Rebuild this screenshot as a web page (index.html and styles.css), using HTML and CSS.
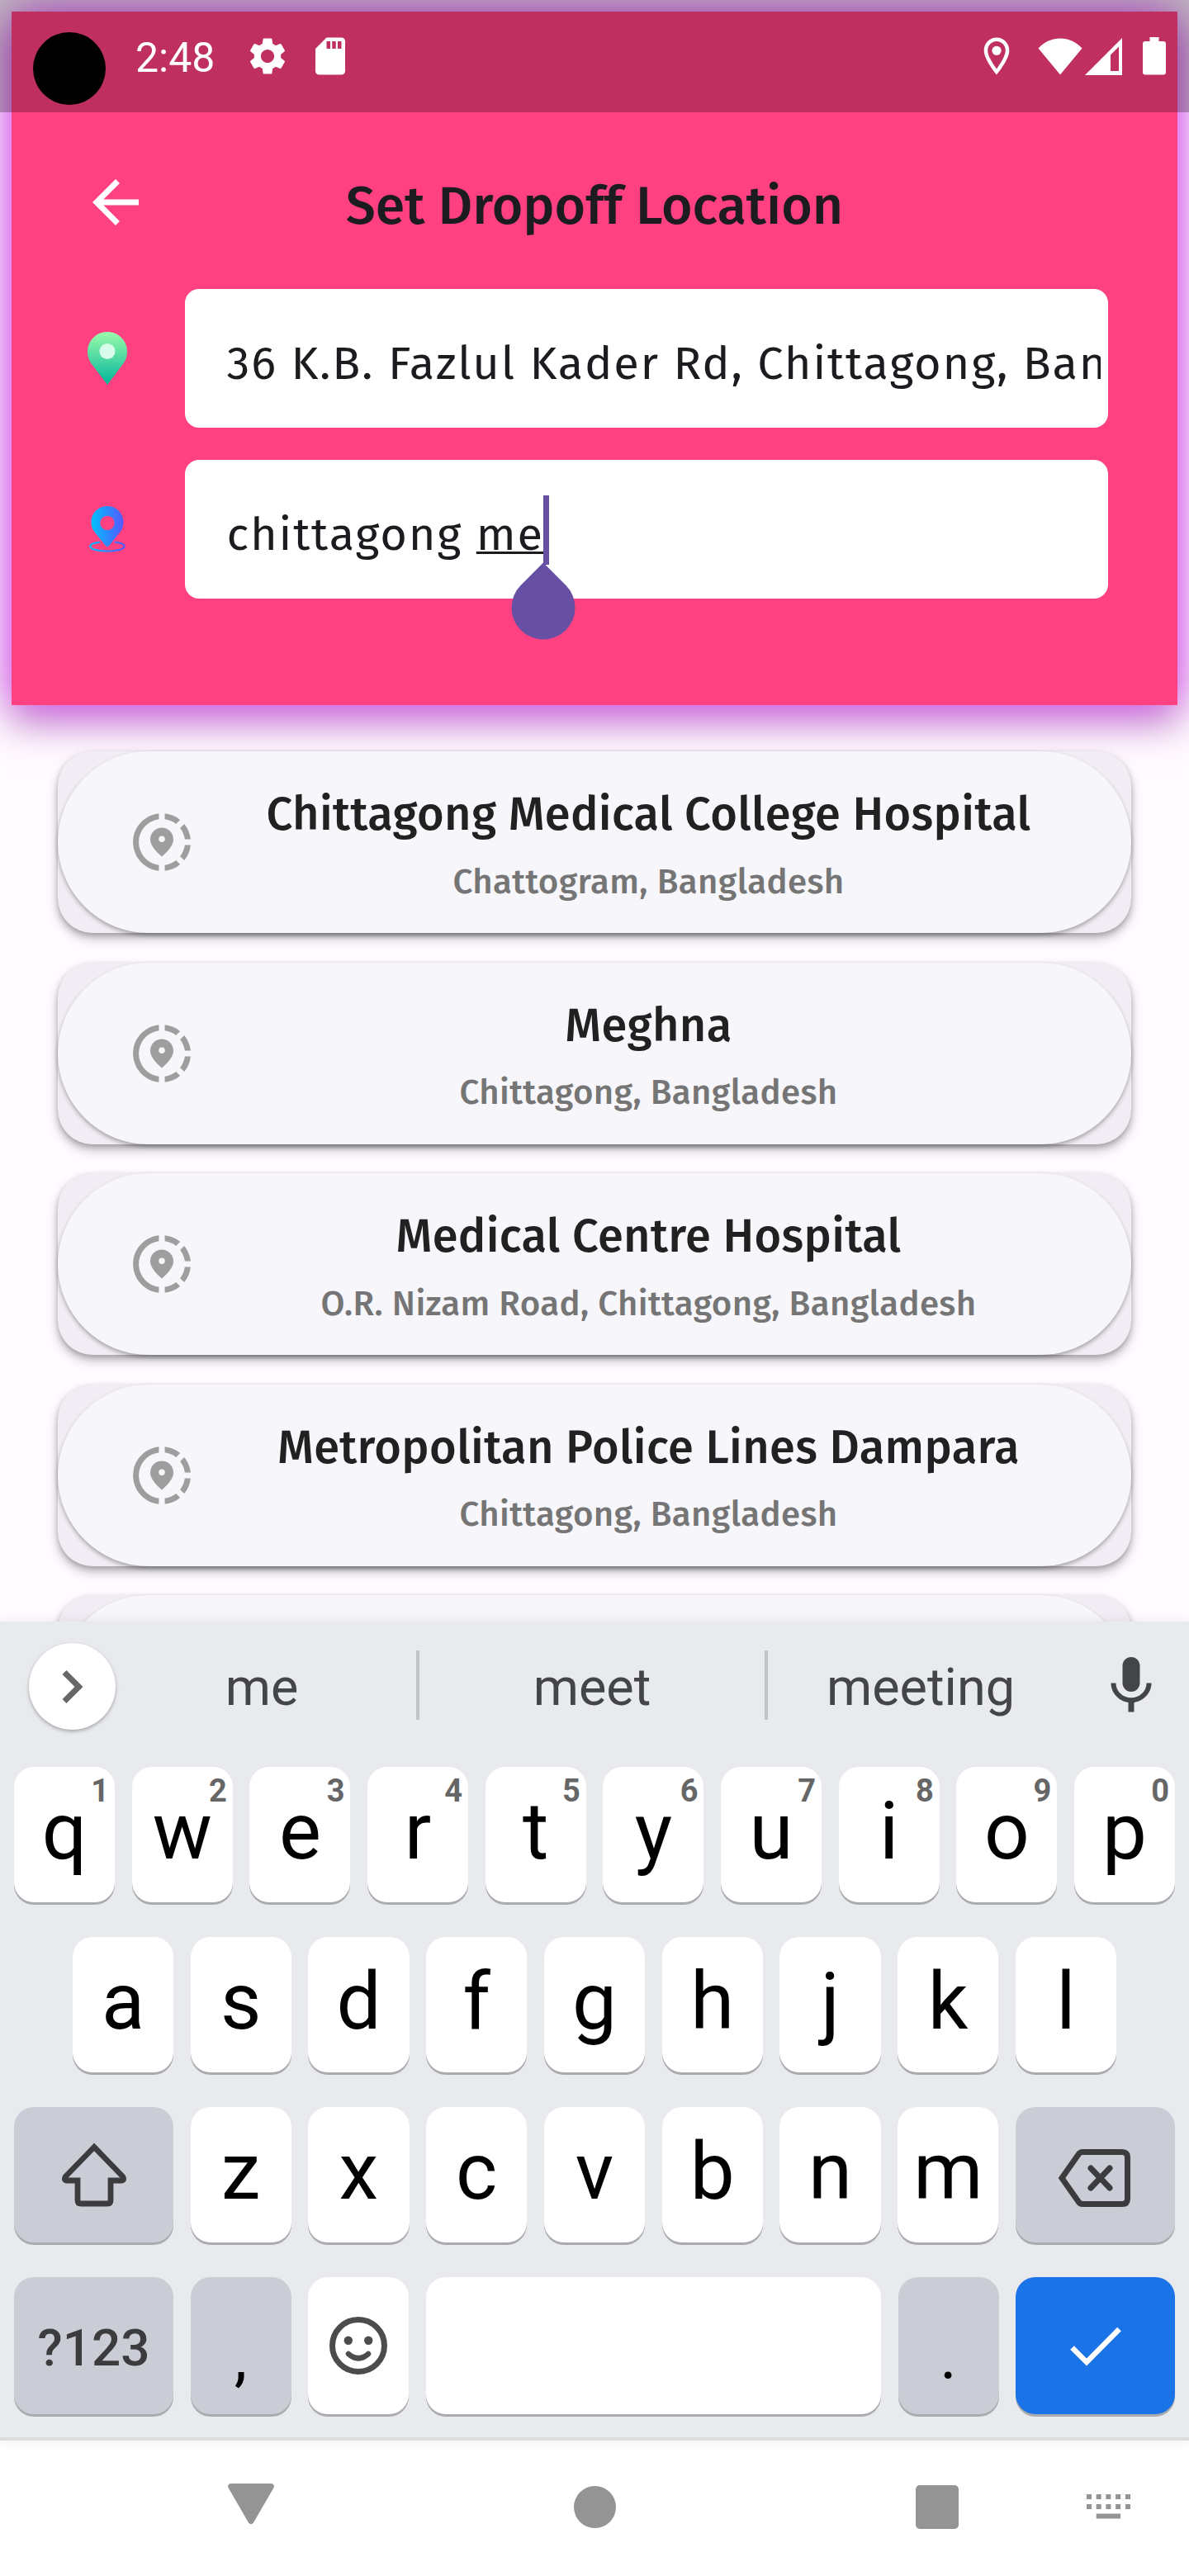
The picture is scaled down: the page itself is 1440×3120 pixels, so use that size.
FILE: index.html
```html
<!DOCTYPE html>
<html lang="en">
<head>
<meta charset="utf-8">
<title>Set Dropoff Location</title>
<link rel="stylesheet" href="styles.css">
</head>
<body>
<div class="phone">
  <div class="status-bar">
    <div class="camera"></div>
    <span class="clock">2:48</span>
    <svg class="ic-gear" width="54" height="54" viewBox="0 0 24 24" fill="#fff"><path d="M19.14 12.94c.04-.3.06-.61.06-.94 0-.32-.02-.64-.07-.94l2.03-1.58c.18-.14.23-.41.12-.61l-1.92-3.32c-.12-.22-.37-.29-.59-.22l-2.39.96c-.5-.38-1.03-.7-1.62-.94l-.36-2.54c-.04-.24-.24-.41-.48-.41h-3.84c-.24 0-.43.17-.47.41l-.36 2.54c-.59.24-1.13.57-1.62.94l-2.39-.96c-.22-.08-.47 0-.59.22L2.74 8.87c-.12.21-.08.47.12.61l2.03 1.58c-.05.3-.09.63-.09.94s.02.64.07.94l-2.03 1.58c-.18.14-.23.41-.12.61l1.92 3.32c.12.22.37.29.59.22l2.39-.96c.5.38 1.03.7 1.62.94l.36 2.54c.05.24.24.41.48.41h3.84c.24 0 .44-.17.47-.41l.36-2.54c.59-.24 1.13-.56 1.62-.94l2.39.96c.22.08.47 0 .59-.22l1.92-3.32c.12-.22.07-.47-.12-.61l-2.01-1.58zM12 15.6c-1.98 0-3.6-1.62-3.6-3.6s1.62-3.6 3.6-3.6 3.6 1.62 3.6 3.6-1.62 3.6-3.6 3.6z"/></svg>
    <svg class="ic-sd" width="54" height="54" viewBox="0 0 24 24" fill="#fff"><path d="M18 2h-8L4.02 8 4 20c0 1.1.9 2 2 2h12c1.1 0 2-.9 2-2V4c0-1.1-.9-2-2-2zm-6 6h-2V4h2v4zm3 0h-2V4h2v4zm3 0h-2V4h2v4z"/></svg>
    <span class="spring"></span>
    <svg class="ic-loc" width="54" height="54" viewBox="0 0 24 24" fill="#fff"><path fill-rule="evenodd" d="M12 2C8.13 2 5.2 5.1 5.2 9c0 5 6.800 13 6.800 13s6.800-8 6.800-13c0-3.900-2.930-7-6.800-7zM7.200 9c0-2.760 2.050-5 4.800-5s4.800 2.240 4.800 5c0 2.880-2.900 7.190-4.800 9.880C10.100 16.200 7.200 11.900 7.200 9z"/><circle cx="12" cy="9" r="2.500"/></svg>
    <svg class="ic-wifi" width="54" height="45" viewBox="0 0 54 45" fill="#fff"><path d="M27 44.500L.5 12.500C8 4.500 17 .5 27 .5s19 4 26.500 12z"/></svg>
    <svg class="ic-signal" width="45" height="45" viewBox="0 0 45 45" fill="#fff"><path fill-rule="evenodd" d="M45 0v45H0zM41 10.500L31 20.500V40h10z"/></svg>
    <svg class="ic-battery" width="28" height="46" viewBox="0 0 28 46" fill="#fff"><path d="M8.500 0h11v5H25a3 3 0 0 1 3 3v34.500a3 3 0 0 1-3 3H3a3 3 0 0 1-3-3V8a3 3 0 0 1 3-3h5.500z"/></svg>
  </div>

  <main class="screen">
    <header class="header">
      <div class="title-row">
        <svg class="back" width="84" height="84" viewBox="0 0 24 24" fill="#fff"><path d="M20 11H7.830l5.590-5.590L12 4l-8 8 8 8 1.410-1.410L7.830 13H20v-2z"/></svg>
        <h1 class="title">Set Dropoff Location</h1>
      </div>
      <div class="field-row">
        <svg class="pin" width="48" height="64" viewBox="0 0 48 64"><defs><linearGradient id="green" x1="0" y1="0" x2="0" y2="1"><stop offset="0" stop-color="#9bfca9"/><stop offset="1" stop-color="#00b59c"/></linearGradient></defs><path fill="url(#green)" d="M24 0C10.500 0 0 10.500 0 24c0 5 1.500 9.600 4 13.500L24 64l20-26.500c2.500-3.900 4-8.500 4-13.500C48 10.500 37.500 0 24 0z"/><circle cx="24" cy="23.500" r="9.500" fill="#d8fbec"/></svg>
        <div class="field"><span class="field-text">36 K.B. Fazlul Kader Rd, Chittagong, Ban</span></div>
      </div>
      <div class="field-row">
        <svg class="pin" width="48" height="56" viewBox="0 0 48 56"><defs><linearGradient id="blue" x1="0" y1="0" x2="1" y2="0"><stop offset="0" stop-color="#00c0ff"/><stop offset="1" stop-color="#5558ff"/></linearGradient></defs><path fill="url(#blue)" fill-rule="evenodd" d="M24 0C13 0 4.500 8.700 4.500 19.500c0 4 1 7.500 3 10.500L21.500 47.500q2.500 3 5 0L40.500 30c2-3 3-6.500 3-10.500C43.500 8.700 35 0 24 0zM24 11.700a8.700 8.700 0 1 1 0 17.400a8.700 8.700 0 0 1 0-17.400z"/><path fill="none" stroke="url(#blue)" stroke-width="2.200" d="M15 43.600C7 44.500 3.300 46.500 3.300 48.600c0 3.300 9 6 20.700 6s20.700-2.700 20.700-6c0-2.100-3.700-4.100-11.700-5"/></svg>
        <div class="field"><span class="field-text">chittagong <span class="composing">me</span></span>
          <svg class="caret" width="78" height="176" viewBox="0 0 78 176" fill="#6750a4"><path d="M39 0h7v84h-7z"/><path d="M39 81.500L66.200 108.700A38.500 38.500 0 1 1 11.800 108.700z"/></svg>
        </div>
      </div>
    </header>

    <ul class="results">
      <li class="result"><div class="pill"><svg class="share" width="84" height="84" viewBox="0 0 24 24"><use href="#share-location"/></svg><div class="place"><b>Chittagong Medical College Hospital</b><small>Chattogram, Bangladesh</small></div></div></li>
      <li class="result"><div class="pill"><svg class="share" width="84" height="84" viewBox="0 0 24 24"><use href="#share-location"/></svg><div class="place"><b>Meghna</b><small>Chittagong, Bangladesh</small></div></div></li>
      <li class="result"><div class="pill"><svg class="share" width="84" height="84" viewBox="0 0 24 24"><use href="#share-location"/></svg><div class="place"><b>Medical Centre Hospital</b><small>O.R. Nizam Road, Chittagong, Bangladesh</small></div></div></li>
      <li class="result"><div class="pill"><svg class="share" width="84" height="84" viewBox="0 0 24 24"><use href="#share-location"/></svg><div class="place"><b>Metropolitan Police Lines Dampara</b><small>Chittagong, Bangladesh</small></div></div></li>
      <li class="result"><div class="pill"></div></li>
    </ul>
  </main>

  <section class="keyboard">
    <div class="suggestions">
      <div class="expand"><svg width="26" height="42" viewBox="0 0 26 42"><path d="M3 3.500L20.500 21 3 38.500" fill="none" stroke="#666768" stroke-width="7"/></svg></div>
      <span class="word first">me</span><i class="rule"></i>
      <span class="word">meet</span><i class="rule"></i>
      <span class="word">meeting</span>
      <svg class="mic" width="84" height="84" viewBox="0 0 24 24" fill="#444547"><path d="M12 14c1.660 0 2.990-1.340 2.990-3L15 5c0-1.660-1.340-3-3-3S9 3.340 9 5v6c0 1.660 1.340 3 3 3zm5.300-3c0 3-2.540 5.100-5.300 5.100S6.700 14 6.700 11H5c0 3.410 2.720 6.230 6 6.720V21h2v-3.280c3.280-.48 6-3.300 6-6.720h-1.700z"/></svg>
    </div>
    <div class="row">
      <div class="key">q<sup>1</sup></div><div class="key">w<sup>2</sup></div><div class="key">e<sup>3</sup></div><div class="key">r<sup>4</sup></div><div class="key">t<sup>5</sup></div><div class="key">y<sup>6</sup></div><div class="key">u<sup>7</sup></div><div class="key">i<sup>8</sup></div><div class="key">o<sup>9</sup></div><div class="key">p<sup>0</sup></div>
    </div>
    <div class="row inset">
      <div class="key">a</div><div class="key">s</div><div class="key">d</div><div class="key">f</div><div class="key">g</div><div class="key">h</div><div class="key">j</div><div class="key">k</div><div class="key">l</div>
    </div>
    <div class="row">
      <div class="key wide grey icon"><svg width="80" height="78" viewBox="0 0 80 78"><path d="M40 5.500L5.500 41q-3 5 2 5H20v24q0 4 4 4h32q4 0 4-4V46h12.500q5 0 2-5z" fill="none" stroke="#3c3c3e" stroke-width="6.800"/></svg></div>
      <div class="key">z</div><div class="key">x</div><div class="key">c</div><div class="key">v</div><div class="key">b</div><div class="key">n</div><div class="key">m</div>
      <div class="key wide grey icon erase"><svg width="92" height="72" viewBox="0 0 92 72" fill="none" stroke="#3c3c3e" stroke-width="7"><path d="M6 36L26 7.500q2-3 5-3h48q6.500 0 6.500 6.500v50q0 6.500-6.500 6.500H31q-3 0-5-3z"/><path stroke-linecap="round" d="M41 24l23 24M64 24L41 48"/></svg></div>
    </div>
    <div class="row last">
      <div class="key wide grey mode">?123</div>
      <div class="key grey punct">,</div>
      <div class="key icon"><svg width="70" height="70" viewBox="0 0 70 70"><circle cx="35" cy="35" r="31.500" fill="none" stroke="#4c4c4e" stroke-width="7"/><circle cx="22.800" cy="28.700" r="5.200" fill="#4c4c4e"/><circle cx="47.200" cy="28.700" r="5.200" fill="#4c4c4e"/><path d="M23 45q12 10.500 24 0" fill="none" stroke="#4c4c4e" stroke-width="6.500" stroke-linecap="round"/></svg></div>
      <div class="key space"></div>
      <div class="key grey punct">.</div>
      <div class="key wide done icon"><svg width="62" height="48" viewBox="0 0 62 48"><path d="M2.500 25.500L20 43 59.500 3" fill="none" stroke="#fff" stroke-width="6.500"/></svg></div>
    </div>
  </section>

  <nav class="nav">
    <svg class="nav-back" width="56" height="50" viewBox="0 0 56 50" fill="#949494"><path d="M4 0h48q5 .5 3.500 5L31 47.500q-3 3.500-6 0L.5 5Q-1 .5 4 0z"/></svg>
    <span class="nav-home"></span>
    <span class="nav-recent"></span>
    <svg class="nav-kbd" width="54" height="30" viewBox="0 0 54 30" fill="#949494"><path d="M0 0h6v6H0zM11.700 0h6v6h-6zM23.400 0h6v6h-6zM35.100 0h6v6h-6zM47 0h6v6h-6zM0 12h6v6H0zM11.700 12h6v6h-6zM23.400 12h6v6h-6zM35.100 12h6v6h-6zM47 12h6v6h-6zM11.700 23.500h29.400v6H11.700z"/></svg>
  </nav>
</div>

<svg class="defs" width="0" height="0"><symbol id="share-location" viewBox="0 0 24 24"><path d="M13.020 19.930v2.020c2.010-.2 3.840-1 5.320-2.210l-1.420-1.430c-1.110.860-2.440 1.440-3.900 1.620zM4.030 12c0-4.050 3.030-7.410 6.950-7.930V2.050C5.950 2.580 2.030 6.840 2.030 12c0 5.160 3.920 9.420 8.950 9.950v-2.020c-3.920-.52-6.950-3.880-6.950-7.930zm15.920-1h2.020c-.2-2.010-1-3.840-2.210-5.320l-1.430 1.430c.860 1.100 1.440 2.430 1.620 3.890zm-1.610-6.740c-1.480-1.210-3.320-2.010-5.320-2.210v2.020c1.460.18 2.790.76 3.900 1.620l1.420-1.430zm-.02 12.640l1.430 1.420c1.210-1.480 2.010-3.310 2.210-5.320h-2.020c-.18 1.460-.76 2.790-1.620 3.900zM16 11.100C16 8.610 14.100 7 12 7s-4 1.610-4 4.100c0 1.660 1.330 3.630 4 5.900 2.670-2.270 4-4.240 4-5.900zm-4 .9a1.070 1.070 0 0 1 0-2.140 1.070 1.070 0 0 1 0 2.140z"/></symbol></svg>
</body>
</html>
```
FILE: styles.css
```css
* { box-sizing: border-box; }
body { margin: 0; background: #fffbff; font-family: Roboto, sans-serif; }
svg { display: block; flex: none; }
.defs { position: absolute; }

.phone { position: relative; width: 1440px; height: 3120px; display: flex; flex-direction: column; overflow: hidden; }

/* translucent system bar drawn over the app */
.status-bar { position: absolute; z-index: 3; left: 0; top: 0; width: 1440px; height: 136px; padding: 0 28px 0 40px; background: rgba(0, 0, 0, .25); display: flex; align-items: center; color: #fff; }
.camera { width: 88px; height: 88px; margin-top: 30px; border-radius: 50%; background: #000; }
.clock { margin-left: 36px; width: 98px; font-size: 50px; line-height: 60px; margin-top: 4px; }
.ic-gear { margin-left: 35px; }
.ic-sd { margin-left: 22px; }
.spring { flex: 1; }
.ic-wifi { margin-left: 23px; }
.ic-signal { margin-left: 3px; }
.ic-battery { margin-left: 25px; }

.screen { height: 1964px; flex: none; overflow: hidden; }
.header { height: 840px; margin: 14px 14px 0; padding: 189px 84px 0 84px; background: #ff4081; box-shadow: 0 2px 56px 2px #e040fb, 0 22px 40px rgba(0, 0, 0, .25); display: flex; flex-direction: column; }
.title-row { display: flex; align-items: center; height: 84px; margin-bottom: 63px; }
.title { flex: 1; margin: 9px 84px 0 0; text-align: center; font: 500 64.4px/84px "Fira Sans", "Noto Sans", sans-serif; color: #1c1b1f; white-space: nowrap; }
.field-row { display: flex; align-items: center; gap: 70px; margin-bottom: 38.5px; padding-left: 8px; }
.pin { width: 48px; }
.field { position: relative; flex: 1; min-width: 0; height: 168px; padding: 0 9.5px 0 50.5px; border-radius: 17px; background: #fff; font: 400 56px/181px "Fira Sans", "Noto Sans", sans-serif; color: #1c1b1f; letter-spacing: 1.75px; }
.field-text { display: block; overflow: hidden; white-space: nowrap; }
.composing { text-decoration: underline; text-decoration-thickness: 3px; text-underline-offset: 2px; text-decoration-skip-ink: none; }
.caret { position: absolute; left: 395px; top: 43px; z-index: 2; }

.results { list-style: none; margin: 0; padding: 56px 70px 0; display: flex; flex-direction: column; gap: 35.5px; }
.result { height: 220px; flex: none; border-radius: 42px; background: #f2edf5; box-shadow: 0 7px 14px rgba(0, 0, 0, .24), 0 3px 6px rgba(0, 0, 0, .2); }
.pill { height: 220px; border-radius: 110px; background: #f6f6fb; box-shadow: 0 3px 5px rgba(0, 0, 0, .3); display: flex; align-items: center; padding: 0 37px 0 84px; }
.share { fill: #9e9e9e; }
.place { flex: 1; padding-top: 15px; display: flex; flex-direction: column; text-align: center; font-family: "Fira Sans", "Noto Sans", sans-serif; white-space: nowrap; }
.place b { font-size: 56px; line-height: 81.5px; font-weight: 500; color: #212121; letter-spacing: .35px; }
.place small { font-size: 42px; line-height: 81.5px; font-weight: 500; color: #757575; letter-spacing: .35px; }

.keyboard { position: relative; z-index: 2; height: 992px; flex: none; background: #e8eaee; border-bottom: 4px solid #dcdddd; padding: 0 17px; box-shadow: 0 0 14px rgba(0, 0, 0, .08); }
.suggestions { height: 176px; display: grid; grid-template-columns: 105px 364px 4px 418px 4px 370px 84px; align-items: center; padding: 0 0 22px 18px; }
.expand { width: 105px; height: 105px; margin-top: 3px; border-radius: 50%; background: #fff; box-shadow: 0 2px 4px rgba(0, 0, 0, .3); display: flex; align-items: center; justify-content: center; }
.word { text-align: center; font-size: 63px; line-height: 80px; padding-top: 6px; color: #444547; }
.first { padding-right: 10px; }
.rule { width: 4px; height: 84px; background: #c2c4c8; }
.mic { margin: 2px 0 0 28px; }
.row { display: flex; gap: 20.5px; margin-bottom: 42px; }
.inset { padding: 0 71px; }
.key { position: relative; flex: 1 1 0; height: 164px; padding-bottom: 8px; border-radius: 24px; background: #fff; box-shadow: 0 3px 0 #a9abae; font-size: 96px; line-height: 156px; text-align: center; color: #000; display: flex; align-items: center; justify-content: center; }
.key sup { position: absolute; top: 13px; right: 7px; font-size: 38px; line-height: 32px; font-weight: 700; color: #666; }
.key.icon { padding-bottom: 0; }
.key.erase { padding-top: 7px; }
.key.wide { flex: 0 0 193px; }
.grey { background: #cbcdd6; }
.last .key { height: 166px; flex: 0 0 122px; }
.last .key.wide { flex: 0 0 193px; }
.last .key.space { flex: 1; }
.last .mode { padding: 6px 0 0; font-size: 62px; font-weight: 500; color: #3c3c3e; }
.last .punct { padding: 28px 0 0; font-size: 78px; line-height: 138px; }
.row .done { background: #1b73e8; padding-top: 2px; }

.nav { flex: 1; background: #fff; display: flex; align-items: center; padding: 0 70px 4px 276px; }
.nav-back { margin-top: -7px; }
.nav-home { width: 51px; height: 51px; margin-left: 363px; border-radius: 50%; background: #949494; }
.nav-recent { width: 53px; height: 53px; margin-left: 363px; border-radius: 5px; background: #949494; }
.nav-kbd { margin-left: 155px; }
```
